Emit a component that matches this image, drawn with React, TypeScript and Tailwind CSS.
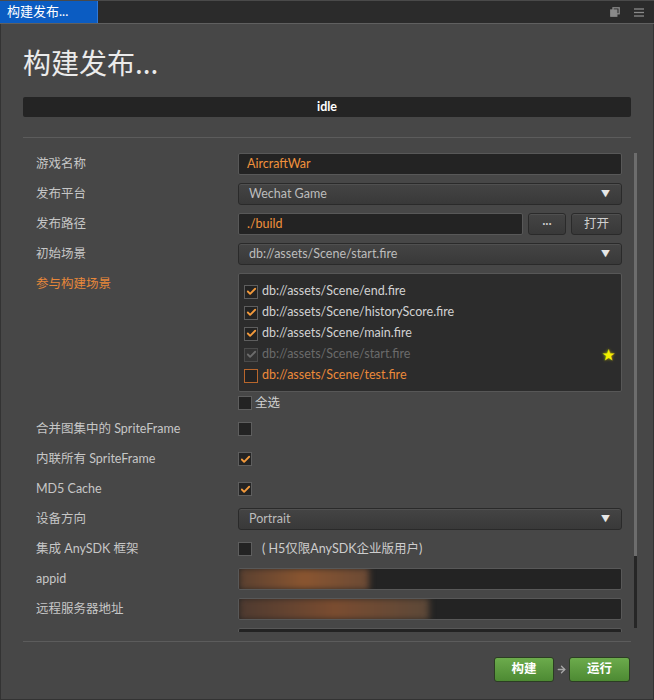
import { Check, ArrowRight } from 'lucide-react';
import type { ReactNode } from 'react';

const scenes = [
  { path: 'db://assets/Scene/end.fire', state: 'on' },
  { path: 'db://assets/Scene/historyScore.fire', state: 'on' },
  { path: 'db://assets/Scene/main.fire', state: 'on' },
  { path: 'db://assets/Scene/start.fire', state: 'disabled' },
  { path: 'db://assets/Scene/test.fire', state: 'hover' },
];

function CheckBox({ checked, muted, hot }: { checked?: boolean; muted?: boolean; hot?: boolean }) {
  const border = hot ? 'border-[#b8662c]' : muted ? 'border-[#4a4a4a]' : 'border-[#5e5e5e]';
  return (
    <span
      className={`flex items-center justify-center w-[14px] h-[14px] shrink-0 border ${border} ${
        muted ? 'bg-[#333333]' : 'bg-[#232323]'
      }`}
    >
      {checked && (
        <Check
          size={11}
          strokeWidth={4}
          className={muted ? 'text-[#6c6c6c]' : 'text-[#f39a3c]'}
        />
      )}
    </span>
  );
}

function Row({ label, children, orange }: { label: string; children?: ReactNode; orange?: boolean }) {
  return (
    <div className="flex items-center h-[30px] shrink-0">
      <div className={`w-[202px] shrink-0 ${orange ? 'text-[#e8873a]' : 'text-[#c6c6c6]'}`}>{label}</div>
      <div className="flex-1 flex items-center">{children}</div>
    </div>
  );
}

function Input({ value, className = '', children }: { value?: string; className?: string; children?: ReactNode }) {
  return (
    <div
      className={`h-[22px] flex items-center px-[8px] bg-[#232323] border border-[#585858] rounded-[2px] text-[#f0913c] overflow-hidden ${className}`}
    >
      {value}
      {children}
    </div>
  );
}

function Select({ value }: { value: string }) {
  return (
    <div className="flex-1 h-[22px] flex items-center justify-between pl-[10px] pr-[11px] bg-gradient-to-b from-[#444444] to-[#393939] border border-[#2a2a2a] rounded-[3px] text-[#bcbcbc] shadow-[inset_0_1px_0_#505050]">
      <span>{value}</span>
      <span className="text-[9px] text-[#e6e6e6]">▼</span>
    </div>
  );
}

function SmallButton({ label, className = '' }: { label: string; className?: string }) {
  return (
    <div
      className={`h-[22px] flex items-center justify-center bg-gradient-to-b from-[#444444] to-[#393939] border border-[#2a2a2a] rounded-[3px] text-[#cfcfcf] shadow-[inset_0_1px_0_#505050] ${className}`}
    >
      {label}
    </div>
  );
}

export default function App() {
  return (
    <div className="w-[654px] h-[700px] flex flex-col bg-[#2a2a2a] font-['Lato','Noto_Sans_CJK_SC',sans-serif] text-[12.5px] overflow-hidden">
      {/* Tab bar */}
      <div className="h-[24px] shrink-0 flex items-stretch border-t border-t-[#4a4a4a] border-b border-b-[#606060] bg-[#2b2b2b]">
        <div className="w-[98px] flex items-center pl-[7px] bg-[#0b5cc2] border-r border-[#2f78d8] text-white text-[13px]">
          构建发布...
        </div>
        <div className="flex-1" />
        <div className="flex items-center gap-[14px] pr-[10px]">
          <svg width="10" height="10" viewBox="0 0 10 10" fill="none" stroke="#8a8a8a" strokeWidth="1.3">
            <rect x="3" y="0.8" width="6.2" height="6" />
            <rect x="0.8" y="3" width="6" height="6.2" fill="#8a8a8a" />
          </svg>
          <svg width="10" height="9" viewBox="0 0 10 9" stroke="#8a8a8a" strokeWidth="1.3">
            <line x1="0" y1="1" x2="10" y2="1" />
            <line x1="0" y1="4.5" x2="10" y2="4.5" />
            <line x1="0" y1="8" x2="10" y2="8" />
          </svg>
        </div>
      </div>

      {/* Panel */}
      <div className="flex-1 flex flex-col px-[22px] bg-[#474747] border-l border-r border-b border-[#333333]">
        <h1 className="pt-[21px] text-[28px] leading-[34px] text-[#ebebeb] font-['Noto_Sans_CJK_SC',sans-serif]">
          构建发布...
        </h1>

        <div className="mt-[18px] h-[20px] flex items-center justify-center bg-[#242424] rounded-[2px] text-white text-[12.5px] font-bold">
          idle
        </div>

        <div className="mt-[20px] h-px bg-[#5c5c5c]" />

        {/* Form */}
        <div className="mt-[11px] h-[483px] shrink-0 -mr-[12px] flex overflow-hidden">
          <div className="ml-[13px] w-[586px] shrink-0 flex flex-col">
            <Row label="游戏名称">
              <Input value="AircraftWar" className="flex-1" />
            </Row>
            <Row label="发布平台">
              <Select value="Wechat Game" />
            </Row>
            <Row label="发布路径">
              <Input value="./build" className="w-[285px]" />
              <SmallButton label="···" className="ml-[5px] w-[38px]" />
              <SmallButton label="打开" className="ml-[5px] flex-1" />
            </Row>
            <Row label="初始场景">
              <Select value="db://assets/Scene/start.fire" />
            </Row>

            <div className="flex items-start pt-[4px] shrink-0">
              <div className="w-[202px] shrink-0 h-[22px] flex items-center text-[#e8873a]">参与构建场景</div>
              <div className="flex-1 h-[119px] bg-[#2c2c2c] border border-[#575757] rounded-[2px] pt-[7px] pl-[5px] pr-[6px]">
                {scenes.map((s) => (
                  <div key={s.path} className="h-[21px] flex items-center gap-[4px]">
                    <CheckBox checked={s.state !== 'hover'} muted={s.state === 'disabled'} hot={s.state === 'hover'} />
                    <span
                      className={
                        s.state === 'disabled'
                          ? 'text-[#6a6a6a]'
                          : s.state === 'hover'
                          ? 'text-[#ec8a3a]'
                          : 'text-[#d2d2d2]'
                      }
                    >
                      {s.path}
                    </span>
                    {s.state === 'disabled' && (
                      <span className="ml-auto text-[13px] leading-none text-[#f4f000] [text-shadow:0_0_3px_#c8c800]">
                        ★
                      </span>
                    )}
                  </div>
                ))}
              </div>
            </div>

            <div className="flex items-center h-[22px] shrink-0">
              <div className="w-[202px] shrink-0" />
              <CheckBox />
              <span className="ml-[3px] text-[#d0d0d0]">全选</span>
            </div>

            <Row label="合并图集中的 SpriteFrame">
              <CheckBox />
            </Row>
            <Row label="内联所有 SpriteFrame">
              <CheckBox checked />
            </Row>
            <Row label="MD5 Cache">
              <CheckBox checked />
            </Row>
            <Row label="设备方向">
              <Select value="Portrait" />
            </Row>
            <Row label="集成 AnySDK 框架">
              <CheckBox />
              <span className="ml-[10px] text-[#cdcdcd]">( H5仅限AnySDK企业版用户)</span>
            </Row>
            <Row label="appid">
              <Input className="flex-1 !px-0">
                <div className="w-[130px] h-[22px] bg-gradient-to-r from-[#5a4030] via-[#8a5530] to-[#6b4a35] blur-[3px]" />
              </Input>
            </Row>
            <Row label="远程服务器地址">
              <Input className="flex-1 !px-0">
                <div className="w-[190px] h-[22px] bg-gradient-to-r from-[#4e3a30] via-[#7a4c30] to-[#5c4838] blur-[3px]" />
              </Input>
            </Row>
            <Row label="">
              <Input className="flex-1" />
            </Row>
          </div>

          {/* Scrollbar */}
          <div className="ml-[12px] mt-[4px] w-[3px] h-[475px] flex flex-col shrink-0">
            <div className="h-[403px] bg-[#6d6d6d]" />
            <div className="flex-1 bg-[#262626]" />
          </div>
        </div>

        <div className="mt-[9px] h-px bg-[#5c5c5c]" />

        <div className="mt-[15px] flex items-center justify-end pr-px">
          <div className="w-[60px] h-[25px] flex items-center justify-center rounded-[3px] bg-gradient-to-b from-[#6cab4c] to-[#4d8a33] border border-[#2c3d24] text-white font-bold">
            构建
          </div>
          <ArrowRight size={11} strokeWidth={3} className="mx-[2px] text-[#a8a8a8]" />
          <div className="w-[61px] h-[25px] flex items-center justify-center rounded-[3px] bg-gradient-to-b from-[#6cab4c] to-[#4d8a33] border border-[#2c3d24] text-white font-bold">
            运行
          </div>
        </div>
      </div>
    </div>
  );
}
